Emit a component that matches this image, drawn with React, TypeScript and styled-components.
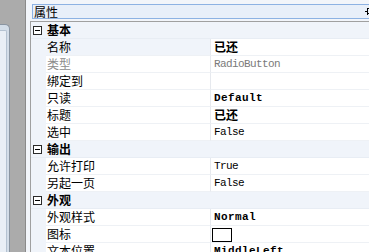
import React from "react";
import styled, { createGlobalStyle } from "styled-components";

const GlobalStyle = createGlobalStyle`
  html, body {
    margin: 0;
    padding: 0;
  }
  body {
    width: 369px;
    height: 252px;
    overflow: hidden;
    background: #f2f5fa;
    font-family: "Noto Sans CJK SC", "Liberation Sans", sans-serif;
    font-size: 12px;
    color: #000;
  }
`;

const Frame = styled.div`
  display: flex;
  width: 369px;
  height: 252px;
  overflow: hidden;
`;

const Strip = styled.div`
  flex: 0 0 25px;
  background: #ababab;
  border-right: 1px solid #8a8a8a;
  display: flex;
  flex-direction: column;
`;

const DocWindow = styled.div`
  margin-top: 24px;
  width: 9px;
  flex: 1;
  background: #d3dde8;
  border-top: 1px solid #8a95a1;
  border-right: 1px solid #8a95a1;
  border-top-right-radius: 5px;
  display: flex;
  flex-direction: column;
`;

const DocInner = styled.div`
  margin-top: 5px;
  width: 6px;
  flex: 1;
  background: #e9eff6;
  border-top: 1px solid #b4c2d1;
  border-right: 1px solid #b4c2d1;
  border-top-right-radius: 2px;
`;

const Panel = styled.div`
  flex: 1;
  min-width: 0;
  display: flex;
  flex-direction: column;
  background: #f2f5fa;
`;

const Header = styled.div`
  margin: 4px -10px 2px 6px;
  height: 13px;
  border: 1px solid #8db2e3;
  background: #e8eff9;
  display: flex;
  align-items: center;
  justify-content: space-between;
  padding: 0 0 0 1px;
  line-height: 13px;
`;

const Pin = styled.svg`
  flex: 0 0 12px;
  margin-right: 1px;
`;

const Grid = styled.div`
  flex: 1;
  margin-left: 4px;
  border-top: 1px solid #a0a0a0;
  border-left: 1px solid #a0a0a0;
  background: #fff;
`;

const CategoryRow = styled.div`
  display: flex;
  align-items: center;
  height: 16px;
  border-bottom: 1px solid #e8edf4;
  background: #f0f4fa;
  font-weight: bold;
  line-height: 16px;
`;

const Toggle = styled.span`
  position: relative;
  box-sizing: border-box;
  width: 9px;
  height: 9px;
  margin: 0 5px 0 2px;
  border: 1px solid #2a2a2a;
  background: #fff;
  &::after {
    content: "";
    position: absolute;
    left: 1px;
    top: 3px;
    width: 5px;
    height: 1px;
    background: #000;
  }
`;

const PropRow = styled.div`
  display: grid;
  grid-template-columns: 15px 165px 1fr;
  height: 17px;
`;

const Gutter = styled.div`
  background: #f0f4fa;
`;

const NameCell = styled.div<{ $selected?: boolean; $dim?: boolean }>`
  box-sizing: border-box;
  padding-left: 1px;
  line-height: 16px;
  border-bottom: 1px solid #eef1f5;
  border-right: 1px solid #e6e9ee;
  background: ${(p) => (p.$selected ? "#f0f4fa" : "#fff")};
  color: ${(p) => (p.$dim ? "#8c8c8c" : "#000")};
  white-space: nowrap;
`;

const ValueCell = styled.div<{ $kind: string }>`
  box-sizing: border-box;
  padding-left: ${(p) => (p.$kind === "box" ? "1px" : "3px")};
  line-height: 16px;
  border-bottom: 1px solid #eef1f5;
  white-space: nowrap;
  overflow: hidden;
  color: ${(p) => (p.$kind === "gray" ? "#7a7a7a" : "#000")};
  font-family: ${(p) =>
    p.$kind === "cjk"
      ? '"Noto Sans CJK SC", sans-serif'
      : '"Liberation Mono", monospace'};
  font-size: ${(p) => (p.$kind === "cjk" ? "12px" : "11px")};
  font-weight: ${(p) => (p.$kind === "cjk" || p.$kind === "bold" ? "bold" : "normal")};
  letter-spacing: ${(p) =>
    p.$kind === "bold" ? "0.4px" : p.$kind === "cjk" ? "0" : "-0.6px"};
`;

const ImageBox = styled.div`
  box-sizing: border-box;
  width: 20px;
  height: 14px;
  margin-top: 2px;
  border: 1px solid #000;
  background: #fff;
`;

type Prop = { name: string; value?: string; kind?: string; selected?: boolean; dim?: boolean };
type Section = { title: string; props: Prop[] };

const sections: Section[] = [
  {
    title: "基本",
    props: [
      { name: "名称", value: "已还", kind: "cjk", selected: true },
      { name: "类型", value: "RadioButton", kind: "gray", dim: true },
      { name: "绑定到" },
      { name: "只读", value: "Default", kind: "bold" },
      { name: "标题", value: "已还", kind: "cjk" },
      { name: "选中", value: "False", kind: "mono" },
    ],
  },
  {
    title: "输出",
    props: [
      { name: "允许打印", value: "True", kind: "mono" },
      { name: "另起一页", value: "False", kind: "mono" },
    ],
  },
  {
    title: "外观",
    props: [
      { name: "外观样式", value: "Normal", kind: "bold" },
      { name: "图标", kind: "box" },
      { name: "文本位置", value: "MiddleLeft", kind: "bold" },
    ],
  },
];

export default function App() {
  return (
    <>
      <GlobalStyle />
      <Frame>
        <Strip>
          <DocWindow>
            <DocInner />
          </DocWindow>
        </Strip>
        <Panel>
          <Header>
            <span>属性</span>
            <Pin width="12" height="9" viewBox="0 0 12 9">
              <path d="M0 4.5H2.5M2.5 1V8M2.5 1.5H11.5M2.5 6.5H11.5M5.5 5.5H11.5" stroke="#000" strokeWidth="1" fill="none" />
            </Pin>
          </Header>
          <Grid>
            {sections.map((s) => (
              <React.Fragment key={s.title}>
                <CategoryRow>
                  <Toggle />
                  {s.title}
                </CategoryRow>
                {s.props.map((p) => (
                  <PropRow key={p.name}>
                    <Gutter />
                    <NameCell $selected={p.selected} $dim={p.dim}>
                      {p.name}
                    </NameCell>
                    <ValueCell $kind={p.kind || "mono"}>
                      {p.kind === "box" ? <ImageBox /> : p.value}
                    </ValueCell>
                  </PropRow>
                ))}
              </React.Fragment>
            ))}
          </Grid>
        </Panel>
      </Frame>
    </>
  );
}
